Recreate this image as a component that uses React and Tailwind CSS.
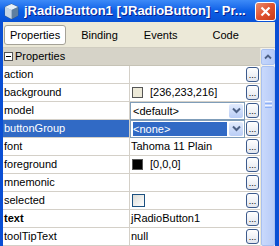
import React from 'react';

const rows = [
  { name: 'action', value: null },
  { name: 'background', value: 'swatch', color: '#ece9d8', text: '[236,233,216]' },
  { name: 'model', value: 'combo', text: '<default>' },
  { name: 'buttonGroup', value: 'combo', text: '<none>', selected: true },
  { name: 'font', value: 'text', text: 'Tahoma 11 Plain' },
  { name: 'foreground', value: 'swatch', color: '#000000', text: '[0,0,0]' },
  { name: 'mnemonic', value: null },
  { name: 'selected', value: 'check' },
  { name: 'text', value: 'text', text: 'jRadioButton1', bold: true },
  { name: 'toolTipText', value: 'text', text: 'null' },
];

function Ellipsis() {
  return (
    <div className="w-[13px] h-[15px] rounded-[3px] border border-[#3c5a8c] bg-gradient-to-b from-white to-[#e2e6ee] flex items-end justify-center text-[9px] leading-[9px] text-black pb-[1px]">
      ...
    </div>
  );
}

function Chevron() {
  return (
    <svg width="9" height="7" viewBox="0 0 9 7">
      <path d="M1 1.5 L4.5 5 L8 1.5" fill="none" stroke="#4d6185" strokeWidth="2" />
    </svg>
  );
}

function ValueCell({ row }) {
  if (row.value === 'swatch') {
    return (
      <div className="flex items-center gap-[7px] pl-[2px]">
        <div className="w-[11px] h-[11px] border border-[#555]" style={{ background: row.color }} />
        <span>{row.text}</span>
      </div>
    );
  }
  if (row.value === 'combo') {
    return (
      <div className="h-full flex items-center">
        <div className="flex-1 h-[18px] border border-[#7f9db9] bg-white flex items-center pl-[2px] pr-[1px]">
          <span className={`flex-1 h-[14px] leading-[14px] ${row.selected ? 'bg-[#316ac5] text-white' : ''}`}>{row.text}</span>
          <div className="w-[14px] h-[14px] ml-[2px] rounded-[2px] bg-gradient-to-b from-[#e2ebfd] to-[#b9cdf6] flex items-center justify-center">
            <Chevron />
          </div>
        </div>
      </div>
    );
  }
  if (row.value === 'check') {
    return (
      <div className="pl-[2px]">
        <div className="w-[13px] h-[13px] border border-[#1c5180] bg-gradient-to-br from-[#dcdcd7] to-white" />
      </div>
    );
  }
  if (row.value === 'text') {
    return <span className="pl-[1px]">{row.text}</span>;
  }
  return null;
}

export default function App() {
  return (
    <div className="w-[279px] h-[246px] overflow-hidden flex flex-col bg-[#0a4fd4] text-[11px] text-black" style={{ fontFamily: '"Liberation Sans", Arial, sans-serif' }}>
      {/* title bar */}
      <div className="h-[22px] shrink-0 flex items-center pl-[3px] pr-[3px] bg-gradient-to-b from-[#3d8af7] via-[#0a5fe6] to-[#0851d6]">
        <svg width="17" height="17" viewBox="0 0 17 17" className="shrink-0">
          <path d="M8.5 1 L15 4 L15 12.5 L8.5 16 L2 12.5 L2 4 Z" fill="#8fa9c4" stroke="#3b5877" strokeWidth="0.8" />
          <path d="M8.5 1 L15 4 L8.5 7 L2 4 Z" fill="#e7f0f8" />
          <path d="M8.5 7 L15 4 L15 12.5 L8.5 16 Z" fill="#5f7f9f" />
          <path d="M2 4 L8.5 7 L8.5 16 L2 12.5 Z" fill="#c5d6e6" />
        </svg>
        <div className="ml-[4px] flex-1 text-white font-bold text-[13px] whitespace-nowrap overflow-hidden" style={{ textShadow: '1px 1px #0a1e8c' }}>
          jRadioButton1 [JRadioButton] - Pr...
        </div>
        <div className="w-[21px] h-[19px] shrink-0 rounded-[3px] border border-white bg-gradient-to-br from-[#e88a6e] via-[#e0512e] to-[#c83a18] flex items-center justify-center">
          <svg width="11" height="11" viewBox="0 0 11 11">
            <path d="M1.5 1.5 L9.5 9.5 M9.5 1.5 L1.5 9.5" stroke="white" strokeWidth="2.2" />
          </svg>
        </div>
      </div>

      {/* body */}
      <div className="flex-1 flex flex-col ml-[3px] mr-[4px] bg-[#ece9d8] min-h-0">
        {/* tabs */}
        <div className="h-[25px] shrink-0 flex items-center pt-[1px]">
          <div className="ml-[1px] h-[20px] px-[5px] flex items-center bg-white border border-[#a5a297] rounded-[3px]">Properties</div>
          <div className="ml-[15px]">Binding</div>
          <div className="ml-[26px]">Events</div>
          <div className="ml-[35px]">Code</div>
        </div>

        <div className="flex-1 flex min-h-0 border-t border-[#d0cdc0]">
          <div className="w-[257px] shrink-0 flex flex-col">
            <div className="h-[18px] shrink-0 flex items-center bg-[#d6d3c8] border-b border-[#c6c3b6] pl-[1px]">
              <div className="w-[9px] h-[9px] border border-[#555] bg-white flex items-center justify-center">
                <div className="w-[5px] h-[1px] bg-black" />
              </div>
              <span className="ml-[2px]">Properties</span>
            </div>
            {rows.map((row) => (
              <div key={row.name} className="h-[18px] shrink-0 flex border-b border-[#d4d0c8] bg-white">
                <div className={`w-[127px] shrink-0 flex items-center pl-[1px] border-r border-[#d4d0c8] ${row.selected ? 'bg-[#316ac5] text-white' : ''} ${row.bold ? 'font-bold' : ''}`}>
                  {row.name}
                </div>
                <div className="flex-1 flex items-center min-w-0">
                  <div className="flex-1 min-w-0 h-full flex items-center">
                    <div className="flex-1">
                      <ValueCell row={row} />
                    </div>
                  </div>
                  <div className="w-[15px] shrink-0 flex items-center justify-center">
                    <Ellipsis />
                  </div>
                </div>
              </div>
            ))}
          </div>
          {/* scrollbar */}
          <div className="ml-[1px] w-[14px] shrink-0 flex flex-col bg-[#f3f1ec]">
            <div className="h-[16px] mt-[1px] rounded-[2px] border border-[#a8c0f0] bg-gradient-to-r from-[#c4d6fc] to-[#b4c9f7] flex items-center justify-center">
              <svg width="8" height="6" viewBox="0 0 8 6">
                <path d="M1 4.5 L4 1.5 L7 4.5" fill="none" stroke="#4d6185" strokeWidth="1.8" />
              </svg>
            </div>
            <div className="flex-1 mt-[1px] rounded-[2px] border border-[#a8c0f0] bg-gradient-to-r from-[#c9d9fc] to-[#b7cbf7] flex flex-col items-center pt-[34px] gap-[1px]">
              <div className="w-[7px] h-[1px] bg-[#eef3fe]" />
              <div className="w-[7px] h-[1px] bg-[#8cb0f8]" />
              <div className="w-[7px] h-[1px] bg-[#eef3fe]" />
              <div className="w-[7px] h-[1px] bg-[#8cb0f8]" />
            </div>
          </div>
        </div>
      </div>
    </div>
  );
}
